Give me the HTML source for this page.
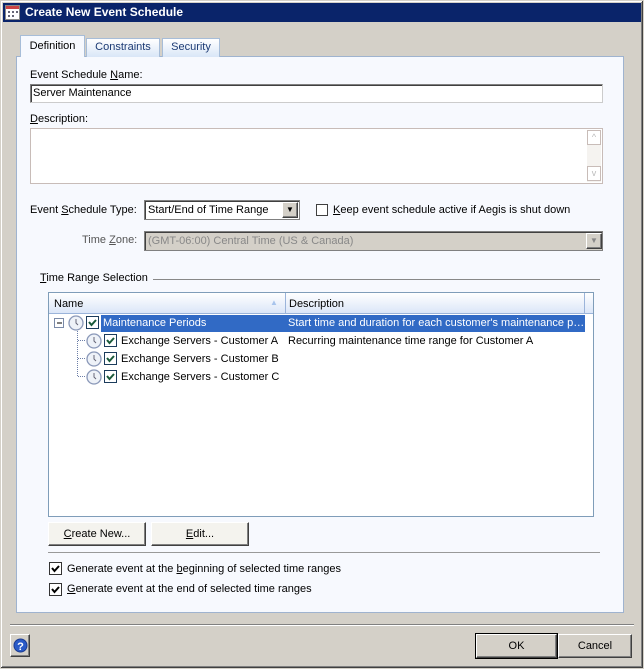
<!DOCTYPE html>
<html><head><style>
*{box-sizing:border-box;margin:0;padding:0}
body{width:644px;height:669px;overflow:hidden;background:#d4d0c8;font-family:"Liberation Sans",sans-serif;font-size:11px;color:#000;position:relative}
.a{position:absolute}
.win{left:0;top:0;width:644px;height:669px;border:1px solid #d4d0c8;box-shadow:inset -1px -1px #404040,inset 1px 1px #fff,inset -2px -2px #808080}
.title{left:3px;top:3px;width:638px;height:19px;background:#0a246a;color:#fff;font-weight:bold;font-size:12px;line-height:19px;padding-left:22px}
.btn{background:#f4f3ee;border:1px solid #fff;border-right-color:#404040;border-bottom-color:#404040;box-shadow:inset -1px -1px #808080;text-align:center;line-height:20px}
.in{background:#fff;border:1px solid #7f9db9}
.cb{width:12px;height:12px;border:1px solid #1c5180;background:#fff}
.ck{width:12px;height:12px;border:1px solid #333;background:#fff}
u{text-decoration:underline}
.tab{top:38px;height:19px;border:1px solid #a7bdd8;border-bottom:none;background:linear-gradient(#fff,#d9e6f7);color:#1d3b74;line-height:17px;text-align:center}
</style></head><body>
<div class="a win"></div>
<div class="a title">Create New Event Schedule</div>
<svg class="a" style="left:5px;top:5px" width="15" height="15"><rect x=".5" y=".5" width="14" height="14" fill="#fff" stroke="#888"/><rect x="1" y="1" width="13" height="3" fill="#c44"/><g fill="#667"><rect x="3" y="6" width="2" height="2"/><rect x="7" y="6" width="2" height="2"/><rect x="11" y="6" width="2" height="2"/><rect x="3" y="10" width="2" height="2"/><rect x="7" y="10" width="2" height="2"/></g></svg>
<div class="a" style="left:16px;top:56px;width:608px;height:557px;background:#f7f9fe;border:1px solid #9fb3cf"></div>
<div class="a tab" style="left:20px;top:35px;width:65px;height:22px;background:#f7f9fe;color:#000;line-height:21px">Definition</div>
<div class="a tab" style="left:86px;width:74px">Constraints</div>
<div class="a tab" style="left:162px;width:58px">Security</div>
<div class="a" style="left:30px;top:69px">Event Schedule <u>N</u>ame:</div>
<div class="a" style="left:30px;top:84px;width:573px;height:19px;background:#fff;border:1px solid #808080;border-right-color:#ccc;border-bottom-color:#ccc;padding:2px 2px;box-shadow:inset 1px 1px #404040">Server Maintenance</div>
<div class="a" style="left:30px;top:113px"><u>D</u>escription:</div>
<div class="a" style="left:30px;top:128px;width:573px;height:56px;background:#fff;border:1px solid #c8bcb8"></div>
<div class="a" style="left:587px;top:130px;width:14px;height:52px;background:#f5f3f0"></div>
<div class="a" style="left:587px;top:130px;width:14px;height:15px;border:1px solid #c8bcb8;background:#fff;color:#bbb;font-size:9px;text-align:center;line-height:13px">^</div>
<div class="a" style="left:587px;top:166px;width:14px;height:15px;border:1px solid #c8bcb8;background:#fff;color:#bbb;font-size:9px;text-align:center;line-height:13px">v</div>
<div class="a" style="left:30px;top:204px">Event <u>S</u>chedule Type:</div>
<div class="a" style="left:144px;top:200px;width:156px;height:20px;background:#fff;border:1px solid #808080;box-shadow:inset 1px 1px #404040;padding:3px 3px">Start/End of Time Range</div>
<div class="a btn" style="left:282px;top:202px;width:16px;height:16px;line-height:14px;font-size:8px;background:#d4d0c8">▼</div>
<div class="a" style="left:316px;top:204px;width:12px;height:12px;border:1px solid #404040;background:#fff"></div>
<div class="a" style="left:333px;top:204px"><u>K</u>eep event schedule active if Aegis is shut down</div>
<div class="a" style="left:82px;top:234px;color:#555">Time <u>Z</u>one:</div>
<div class="a" style="left:144px;top:231px;width:459px;height:20px;background:#d4d0c8;border:1px solid #808080;box-shadow:inset 1px 1px #404040;padding:3px 3px;color:#888">(GMT-06:00) Central Time (US &amp; Canada)</div>
<div class="a btn" style="left:586px;top:233px;width:16px;height:16px;line-height:14px;font-size:8px;background:#d4d0c8;color:#888">▼</div>
<div class="a" style="left:40px;top:272px"><u>T</u>ime Range Selection</div>
<div class="a" style="left:153px;top:279px;width:447px;height:1px;background:#888"></div>
<div class="a" style="left:48px;top:292px;width:546px;height:225px;background:#fff;border:1px solid #7f9db9"></div>
<div class="a" style="left:49px;top:293px;width:544px;height:21px;background:linear-gradient(#fff,#dbe6f8);border-bottom:1px solid #9bb4da"></div>
<div class="a" style="left:285px;top:293px;width:1px;height:20px;background:#9bb4da"></div>
<div class="a" style="left:584px;top:293px;width:1px;height:20px;background:#9bb4da"></div>
<div class="a" style="left:54px;top:298px">Name</div>
<div class="a" style="left:270px;top:298px;color:#a8c4ec;font-size:8px">▲</div>
<div class="a" style="left:289px;top:298px">Description</div>
<div class="a" style="left:101px;top:315px;width:484px;height:17px;background:#316ac5"></div>
<div class="a" style="left:103px;top:317px;color:#fff">Maintenance Periods</div>
<div class="a" style="left:288px;top:317px;color:#fff">Start time and duration for each customer's maintenance p…</div>
<div class="a" style="left:121px;top:335px">Exchange Servers - Customer A</div>
<div class="a" style="left:288px;top:335px">Recurring maintenance time range for Customer A</div>
<div class="a" style="left:121px;top:353px">Exchange Servers - Customer B</div>
<div class="a" style="left:121px;top:371px">Exchange Servers - Customer C</div>
<svg class="a" style="left:50px;top:313px" width="70" height="75">
<g stroke="#6d7fa8" stroke-dasharray="1 1"><line x1="27.5" y1="16" x2="27.5" y2="63"/><line x1="28" y1="27.5" x2="36" y2="27.5"/><line x1="28" y1="45.5" x2="36" y2="45.5"/><line x1="28" y1="63.5" x2="36" y2="63.5"/></g>
<rect x="4.5" y="5.5" width="9" height="9" fill="#fff" stroke="#7a8aa8"/><line x1="7" y1="10" x2="12" y2="10" stroke="#000"/>
<g fill="#eef2f8" stroke="#8a98b8" stroke-width="1.3"><circle cx="26" cy="10" r="7"/><circle cx="44" cy="28" r="7"/><circle cx="44" cy="46" r="7"/><circle cx="44" cy="64" r="7"/></g>
<g stroke="#667" fill="none"><path d="M26 6v4l2 2"/><path d="M44 24v4l2 2"/><path d="M44 42v4l2 2"/><path d="M44 60v4l2 2"/></g>
<g fill="#fff" stroke="#1c3c5c"><rect x="36.5" y="3.5" width="12" height="12"/><rect x="54.5" y="21.5" width="12" height="12"/><rect x="54.5" y="39.5" width="12" height="12"/><rect x="54.5" y="57.5" width="12" height="12"/></g>
<g fill="none" stroke="#1a5a3a" stroke-width="2"><path d="M39 9l2.5 3 4.5-5"/><path d="M57 27l2.5 3 4.5-5"/><path d="M57 45l2.5 3 4.5-5"/><path d="M57 63l2.5 3 4.5-5"/></g>
</svg>
<div class="a btn" style="left:48px;top:522px;width:98px;height:24px;line-height:22px"><u>C</u>reate New...</div>
<div class="a btn" style="left:151px;top:522px;width:98px;height:24px;line-height:22px"><u>E</u>dit...</div>
<div class="a" style="left:48px;top:552px;width:552px;height:1px;background:#999"></div>
<svg class="a" style="left:49px;top:562px" width="13" height="36"><g fill="#fff" stroke="#333"><rect x=".5" y=".5" width="12" height="12"/><rect x=".5" y="21.5" width="12" height="12"/></g><g fill="none" stroke="#000" stroke-width="2"><path d="M3 6l2.5 3 4.5-5"/><path d="M3 27l2.5 3 4.5-5"/></g></svg>
<div class="a" style="left:67px;top:563px">Generate event at the <u>b</u>eginning of selected time ranges</div>
<div class="a" style="left:67px;top:583px"><u>G</u>enerate event at the end of selected time ranges</div>
<div class="a" style="left:10px;top:624px;width:624px;height:2px;border-top:1px solid #808080;border-bottom:1px solid #fff"></div>
<div class="a btn" style="left:10px;top:634px;width:20px;height:23px;background:#d4d0c8"></div>
<svg class="a" style="left:13px;top:637px" width="15" height="17"><circle cx="7.5" cy="8.5" r="6.5" fill="#2a5bc8" stroke="#1a3a90"/><text x="7.5" y="13" font-size="11" font-weight="bold" fill="#fff" text-anchor="middle" font-family="Liberation Sans">?</text></svg>
<div class="a btn" style="left:476px;top:634px;width:81px;height:24px;line-height:22px;background:#d4d0c8;outline:1px solid #000">OK</div>
<div class="a btn" style="left:558px;top:634px;width:74px;height:24px;line-height:22px;background:#d4d0c8">Cancel</div>
</body></html>
